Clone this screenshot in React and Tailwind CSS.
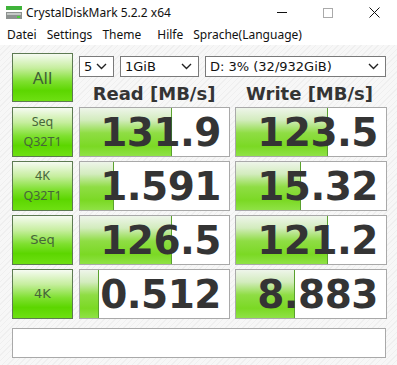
import React from 'react'

const ROWS = [
  { label: ['Seq', 'Q32T1'], read: '131.9', readPct: 62, write: '123.5', writePct: 61 },
  { label: ['4K', 'Q32T1'], read: '1.591', readPct: 23, write: '15.32', writePct: 43 },
  { label: ['Seq'], read: '126.5', readPct: 62, write: '121.2', writePct: 61, fancy: true },
  { label: ['4K'], read: '0.512', readPct: 13, write: '8.883', writePct: 39, fancy: true },
]

const greenBtn =
  'border border-[#5d7a52] bg-[linear-gradient(to_bottom,#f6fbf2_0%,#c6ee9e_30%,#7fe030_58%,#5cd600_78%,#6ee012_100%)]'

function Select({ w, text }) {
  return (
    <div className={`${w} h-[21px] flex items-center justify-between border border-[#7a7a7a] bg-white pl-[4px] pr-[6px] text-[13px] text-[#111]`}>
      <span>{text}</span>
      <svg width="11" height="7" viewBox="0 0 11 7">
        <path d="M1 1l4.5 4.5L10 1" stroke="#222" strokeWidth="1.4" fill="none" />
      </svg>
    </div>
  )
}

function Value({ w, value, pct }) {
  return (
    <div className={`${w} h-[50px] relative border border-[#a9a9a9] bg-white`}>
      <div
        className="absolute left-0 top-0 bottom-0 border-r border-[#5aa12e] bg-[linear-gradient(to_bottom,#eef5ea_0%,#d3ecbe_25%,#8fdd44_52%,#7bd924_80%,#8fe246_100%)]"
        style={{ width: `${pct}%` }}
      />
      <div className="relative h-full flex items-center justify-end pr-[8px] text-[39px] font-bold leading-none tracking-[-0.5px] text-[#343434] font-['DejaVu_Sans',sans-serif]">
        {value}
      </div>
    </div>
  )
}

export default function App() {
  return (
    <div className="w-[397px] h-[365px] bg-white overflow-hidden font-['Noto_Sans','Open_Sans',sans-serif] text-[#111]">
      {/* title bar */}
      <div className="h-[25px] flex items-center">
        <svg className="ml-[6px]" width="17" height="14" viewBox="0 0 17 14">
          <rect x="0" y="0" width="16" height="4" fill="#3fb33a" />
          <rect x="0" y="6" width="16" height="7" fill="#8d9290" />
          <rect x="1" y="7" width="14" height="2" fill="#c4c8c6" />
          <rect x="11" y="10" width="3" height="2" fill="#4ccd3e" />
        </svg>
        <span className="ml-[3px] text-[12px] text-[#111]">CrystalDiskMark 5.2.2 x64</span>
        <div className="ml-auto flex items-center">
          <div className="w-[46px] flex justify-center">
            <div className="w-[10px] h-px bg-[#111]" />
          </div>
          <div className="w-[46px] flex justify-center">
            <div className="w-[10px] h-[10px] border border-[#aaa]" />
          </div>
          <div className="w-[46px] flex justify-center">
            <svg width="11" height="11" viewBox="0 0 11 11">
              <path d="M0.5 0.5l10 10M10.5 0.5l-10 10" stroke="#111" strokeWidth="1" />
            </svg>
          </div>
        </div>
      </div>

      {/* menu */}
      <div className="h-[20px] flex items-center pl-[7px] text-[12px] text-[#111]">
        <span>Datei</span>
        <span className="ml-[10px]">Settings</span>
        <span className="ml-[10px]">Theme</span>
        <span className="ml-[16px]">Hilfe</span>
        <span className="ml-[10px]">Sprache(Language)</span>
      </div>

      {/* content */}
      <div className="h-[320px] pt-[8px] pl-[12px] bg-[repeating-linear-gradient(135deg,#f7f7f7_0px,#f7f7f7_3px,#efefef_3px,#efefef_4px)] font-['DejaVu_Sans',sans-serif]">
        <div className="flex gap-[6px] h-[49px]">
          <div className={`w-[61px] h-[49px] flex items-center justify-center text-[17px] text-[#3f5f36] ${greenBtn} font-['Noto_Sans',sans-serif]`}>
            All
          </div>
          <div className="flex flex-col">
            <div className="flex gap-[6px] mt-[3px]">
              <Select w="w-[35px]" text="5" />
              <Select w="w-[79px]" text="1GiB" />
              <Select w="w-[181px]" text="D: 3% (32/932GiB)" />
            </div>
            <div className="flex text-[18px] font-bold text-[#343434] leading-none mt-[8px]">
              <div className="w-[150px] text-center">Read [MB/s]</div>
              <div className="w-[161px] text-center">Write [MB/s]</div>
            </div>
          </div>
        </div>

        <div className="flex flex-col gap-[4px] mt-[5px]">
          {ROWS.map((r, i) => (
            <div key={i} className="flex gap-[5px]">
              <div
                className={`w-[61px] h-[50px] mr-[1px] flex flex-col items-center justify-center leading-[20px] text-[#46663a] ${greenBtn} ${r.fancy ? "text-[13px] font-['Comic_Sans_MS','DejaVu_Sans',sans-serif]" : "text-[12.5px] font-['Noto_Sans',sans-serif]"}`}
              >
                {r.label.map(l => (
                  <span key={l}>{l}</span>
                ))}
              </div>
              <Value w="w-[151px]" value={r.read} pct={r.readPct} />
              <Value w="w-[152px]" value={r.write} pct={r.writePct} />
            </div>
          ))}
        </div>

        <div className="w-[374px] h-[30px] mt-[9px] border border-[#a9a9a9] bg-white" />
      </div>
    </div>
  )
}
